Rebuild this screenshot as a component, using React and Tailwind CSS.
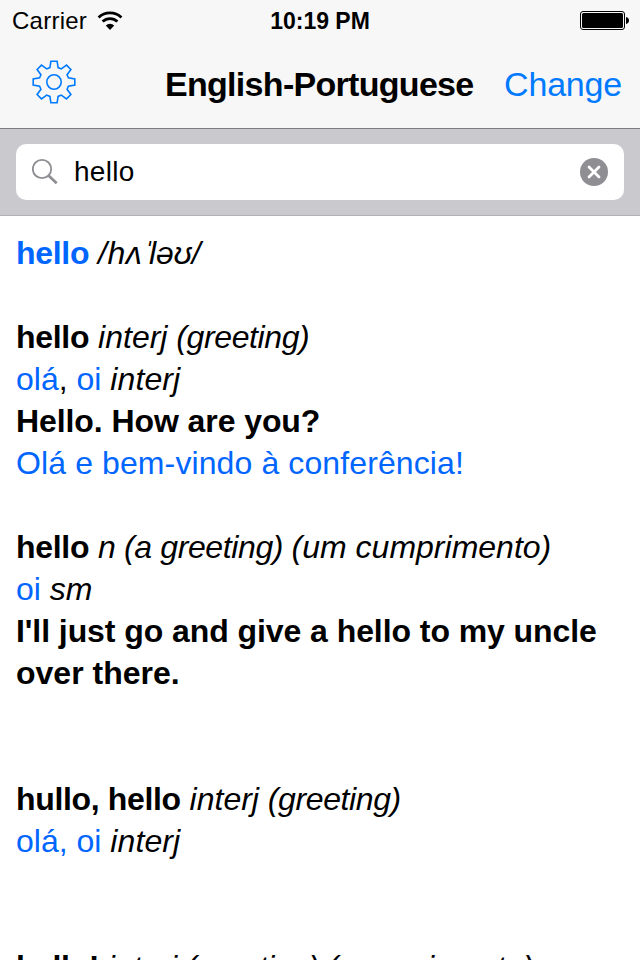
import React, { useState } from 'react';

const lines = [
  [
    { text: 'hello', className: 'font-bold text-[#0066ff] tracking-[-0.3px]' },
    { text: ' ' },
    { text: '/hʌ', className: 'italic tracking-[0.5px]' },
    { text: 'ˈ', className: 'italic tracking-[-4px]' },
    { text: 'ləʊ/', className: 'italic' },
  ],
  [],
  [
    { text: 'hello', className: 'font-bold tracking-[-0.3px]' },
    { text: ' ' },
    { text: 'interj ', className: 'italic' },
    { text: '(greeting)', className: 'italic tracking-[-0.4px]' },
  ],
  [
    { text: 'olá', className: 'text-[#0066ff]' },
    { text: ', ' },
    { text: 'oi', className: 'text-[#0066ff]' },
    { text: ' ' },
    { text: 'interj', className: 'italic tracking-[0.1px]' },
  ],
  [{ text: 'Hello. How are you?', className: 'font-bold tracking-[-0.08px]' }],
  [{ text: 'Olá e bem-vindo à conferência!', className: 'text-[#0066ff] tracking-[0.11px]' }],
  [],
  [
    { text: 'hello', className: 'font-bold tracking-[-0.3px]' },
    { text: ' ' },
    { text: 'n (a greeting) ', className: 'italic tracking-[-0.38px]' },
    { text: '(um cumprimento)', className: 'italic' },
  ],
  [
    { text: 'oi', className: 'text-[#0066ff]' },
    { text: ' ' },
    { text: 'sm', className: 'italic' },
  ],
  [{ text: "I'll just go and give a hello to my uncle", className: 'font-bold tracking-[-0.07px]' }],
  [{ text: 'over there.', className: 'font-bold' }],
  [],
  [],
  [
    { text: 'hullo, hello', className: 'font-bold tracking-[-0.35px]' },
    { text: ' ' },
    { text: 'interj ', className: 'italic' },
    { text: '(greeting)', className: 'italic tracking-[-0.4px]' },
  ],
  [
    { text: 'olá, oi', className: 'text-[#0066ff]' },
    { text: ' ' },
    { text: 'interj', className: 'italic tracking-[0.1px]' },
  ],
  [],
  [],
  [
    { text: 'hello!', className: 'font-bold tracking-[-0.4px]' },
    { text: ' ' },
    { text: 'interj ', className: 'italic' },
    { text: '(greeting) ', className: 'italic tracking-[-0.4px]' },
    { text: '(cumprimento)', className: 'italic' },
  ],
];

// One tooth of the gear, repeated every 45 degrees around the centre
const tooth = [
  [-4.1, 14.4],
  [-3.1, 20.8],
  [3.1, 20.8],
  [4.1, 14.4],
];

const gearPoints = () => {
  const points = [];
  for (let i = 0; i < 8; i++) {
    const a = (i * Math.PI) / 4;
    tooth.forEach(([x, y]) => {
      const px = x * Math.cos(a) + y * Math.sin(a);
      const py = x * Math.sin(a) - y * Math.cos(a);
      points.push(`${(px + 22).toFixed(2)},${(py + 22).toFixed(2)}`);
    });
  }
  return points.join(' ');
};

const GearIcon = () => (
  <svg width="44" height="44" viewBox="0 0 44 44" fill="none" stroke="#007aff" strokeWidth="1.6">
    <polygon points={gearPoints()} />
    <circle cx="22" cy="22" r="7.2" />
  </svg>
);

const WifiIcon = () => (
  <svg width="26" height="20" viewBox="0 0 26 20" fill="none" stroke="#000" strokeWidth="2.8">
    <path d="M1.6 6.4a16.4 16.4 0 0 1 22.8 0" />
    <path d="M5.6 10.6a10.7 10.7 0 0 1 14.8 0" />
    <path d="M13 19l-4.2-4.6a6 6 0 0 1 8.4 0z" fill="#000" stroke="none" />
  </svg>
);

const BatteryIcon = () => (
  <svg width="49" height="19" viewBox="0 0 49 19">
    <rect x="0.5" y="0.5" width="44" height="18" rx="2.5" fill="none" stroke="#000" />
    <rect x="2" y="2" width="41" height="15" rx="1.5" />
    <path d="M46 6c2 .3 3 1.7 3 3.5s-1 3.2-3 3.5z" />
  </svg>
);

const SearchIcon = () => (
  <svg width="28" height="28" viewBox="0 0 28 28" fill="none" stroke="#8e8e93">
    <circle cx="10" cy="11" r="9.2" strokeWidth="1.8" />
    <path d="M16.5 17.5l8.2 7.7" strokeWidth="2.8" />
  </svg>
);

const ClearIcon = () => (
  <svg width="28" height="28" viewBox="0 0 28 28">
    <circle cx="14" cy="14" r="14" fill="#8e8e93" />
    <path d="M9 9l10 10M19 9L9 19" stroke="#fff" strokeWidth="2.8" strokeLinecap="round" />
  </svg>
);

const StatusBar = () => (
  <div className="grid h-[41px] grid-cols-[1fr_auto_1fr] items-center pl-3 pr-[11px]">
    <div className="flex items-center">
      <span className="text-[24px] leading-10 tracking-[0.25px]">Carrier</span>
      <span className="ml-[10px]"><WifiIcon /></span>
    </div>
    <span className="mr-[1px] text-[23px] font-bold leading-10">10:19 PM</span>
    <div className="flex justify-end">
      <BatteryIcon />
    </div>
  </div>
);

const NavBar = () => (
  <div className="flex h-[87px] items-center pl-8 pr-[18px]">
    <button className="mt-[-5px]" aria-label="Settings"><GearIcon /></button>
    <h1 className="ml-[89px] whitespace-nowrap text-[34px] font-bold tracking-[-0.7px]">English-Portuguese</h1>
    <button className="ml-auto text-[34px] tracking-[-0.2px] text-[#007aff]">Change</button>
  </div>
);

const App = () => {
  const [query, setQuery] = useState('hello');

  return (
    <div className="flex h-[960px] w-[640px] flex-col overflow-hidden bg-white font-['Liberation_Sans',sans-serif] text-black">
      <header className="h-[129px] shrink-0 border-b border-[#7f7f80] bg-[#f7f7f7]">
        <StatusBar />
        <NavBar />
      </header>

      <div className="h-[87px] shrink-0 border-b border-[#b1b1b6] bg-[#c9c9ce] px-4 pt-[15px]">
        <div className="flex h-14 items-center rounded-[10px] bg-white px-4">
          <SearchIcon />
          <input
            className="ml-[14px] min-w-0 flex-1 bg-transparent text-[28px] tracking-[0.3px] outline-none"
            value={query}
            onChange={(e) => setQuery(e.target.value)}
          />
          <button onClick={() => setQuery('')} aria-label="Clear"><ClearIcon /></button>
        </div>
      </div>

      <main className="px-4 pt-4 text-[32px] leading-[42px]">
        {lines.map((runs, i) => (
          <p key={i} className="h-[42px] whitespace-pre">
            {runs.map((run, j) => (
              <span key={j} className={run.className}>{run.text}</span>
            ))}
          </p>
        ))}
      </main>
    </div>
  );
};

export default App;
